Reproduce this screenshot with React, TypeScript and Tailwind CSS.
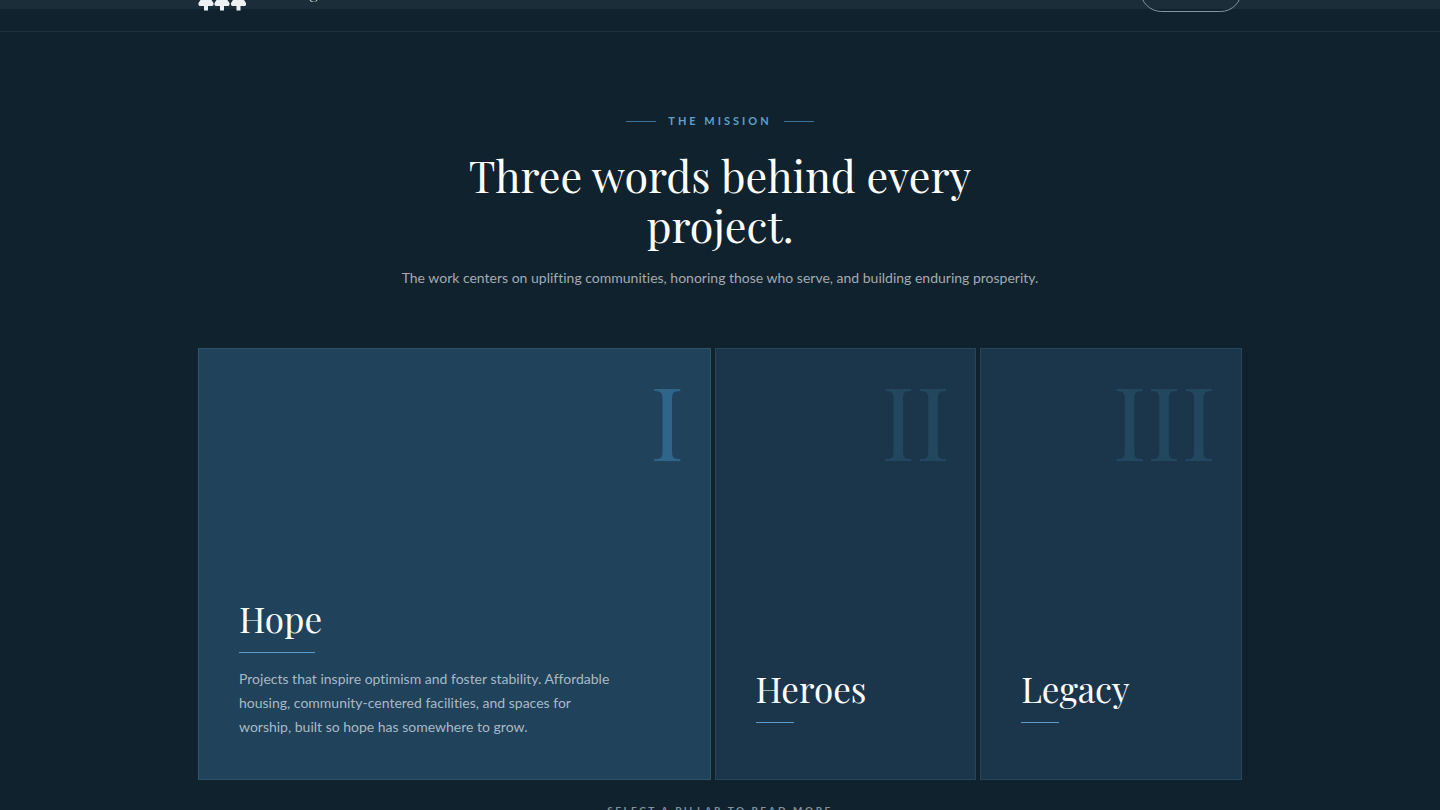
type Pillar = {
  numeral: string;
  title: string;
  text?: string;
}

const pillars: Pillar[] = [
  {
    numeral: 'I',
    title: 'Hope',
    text: 'Projects that inspire optimism and foster stability. Affordable housing, community-centered facilities, and spaces for worship, built so hope has somewhere to grow.',
  },
  { numeral: 'II', title: 'Heroes' },
  { numeral: 'III', title: 'Legacy' },
];

const serif = "font-['Playfair_Display','Liberation_Serif',serif]";

function Logo() {
  return (
    <svg viewBox="0 0 48 42" className="h-[42px] w-12 fill-[#eef1f3]" aria-hidden="true">
      {[8, 24, 40.5].map((x) => (
        <path key={x} d={`M${x} 2l5 10h-2l4 9h-2l1.5 8q-.5 1.5-1 2l2 3q.5 3-1.5 3h-4v4.500h-4v-4.500h-4q-2 0-1.500-3l2-3q-.5-.5-1-2l1.500-8h-2l4-9h-2z`} />
      ))}
    </svg>
  )
}

function Header() {
  return (
    <header className="h-20 border-b border-[#1d303b] bg-linear-to-b from-[#1b2d39] from-[57px] to-[#10222e] to-[57px]">
      <div className="mx-auto flex h-full max-w-[1044px] items-start justify-between pt-[17px]">
        <a href="#home" className="flex items-start gap-3 text-[#dfe5e9]" aria-label="Home">
          <Logo />
          <span className={`${serif} pt-3 text-base leading-6`}>Building Communities</span>
        </a>
        <button className="h-[43px] w-[102px] rounded-full border border-[#8494a0] text-xs text-white">Contact</button>
      </div>
    </header>
  )
}

function PillarCard({ pillar }: { pillar: Pillar }) {
  const open = Boolean(pillar.text);

  return (
    <button
      aria-expanded={open}
      className={`flex h-[432px] min-w-0 flex-col justify-between border pt-5 pb-10 text-left ${open ? 'border-[#2f5369] bg-[#20425b]' : 'border-[#264559] bg-[#1b364b]'}`}
    >
      <span className={`${serif} w-full pr-[25px] text-right text-[102px] leading-[100px] ${open ? 'text-[#2f658b]' : 'text-[#22475f]'}`}>
        {pillar.numeral}
      </span>
      <span className="block px-10">
        <span className={`${serif} block text-[35px] leading-[48px] text-white`}>{pillar.title}</span>
        <span className={`mt-[9px] block h-px bg-[#5b9bcb] ${open ? 'w-[76px]' : 'mb-4 w-[38px]'}`} />
        {open && <span className="mt-[14px] block max-w-[380px] text-sm leading-6 text-[#a9bac6]">{pillar.text}</span>}
      </span>
    </button>
  )
}

export default function App() {
  return (
    <div className="h-screen overflow-hidden bg-[#10222e] font-['Lato',sans-serif] [font-variant-ligatures:no-common-ligatures]">
      <div className="-mt-12">
        <Header />
        <main className="mx-auto max-w-[1044px] pt-20">
          <div className="text-center">
            <p className="flex items-center justify-center gap-3 text-[11px] leading-[18px] font-bold tracking-[3px] text-[#5f9fcd]">
              <span className="h-px w-[30px] bg-[#3f7299]" />
              THE MISSION
              <span className="h-px w-[30px] bg-[#3f7299]" />
            </p>
            <h1 className={`${serif} mx-auto mt-5 max-w-[640px] text-[43px] leading-[50px] text-white`}>
              Three words behind every project.
            </h1>
            <p className="mt-4 text-sm leading-6 text-[#a3abb1]">
              The work centers on uplifting communities, honoring those who serve, and building enduring prosperity.
            </p>
          </div>
          <div className="mt-[58px] grid grid-cols-[513fr_262fr_262fr] gap-1">
            {pillars.map((pillar) => <PillarCard key={pillar.title} pillar={pillar} />)}
          </div>
          <p className="mt-5 text-center text-[10px] leading-5 font-bold tracking-[0.25em] text-[#84919a]">SELECT A PILLAR TO READ MORE</p>
        </main>
      </div>
    </div>
  )
}
